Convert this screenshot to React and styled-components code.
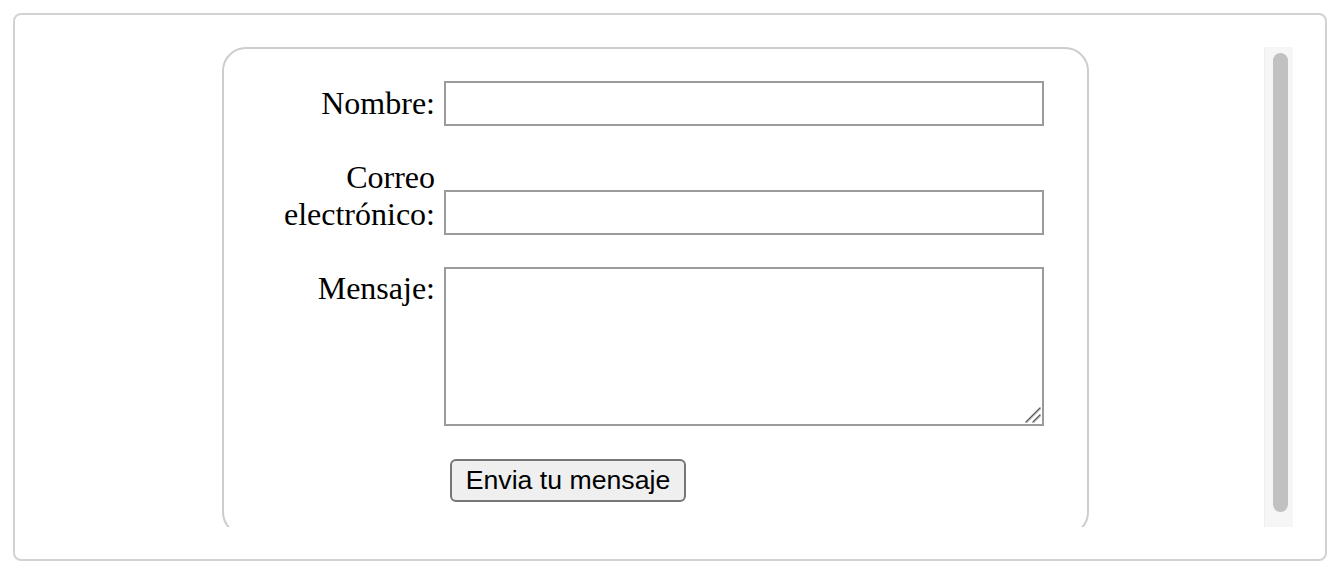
import React from 'react';
import styled, { createGlobalStyle } from 'styled-components';

const Global = createGlobalStyle`
  html, body { margin: 0; padding: 0; background: #fff; }
  body { font-family: "Liberation Serif", "Times New Roman", serif; }
`;

const Frame = styled.div`
  box-sizing: border-box;
  margin: 13px;
  width: 1314px;
  height: 548px;
  border: 2px solid #d2d2d2;
  border-radius: 8px;
  padding: 32px;
`;

const Scroller = styled.div`
  display: flex;
  height: 480px;
`;

const Viewport = styled.div`
  flex: 1;
  min-width: 0;
  overflow: hidden;
`;

const Track = styled.div`
  box-sizing: border-box;
  width: 29px;
  display: flex;
  flex-direction: column;
  padding: 6px 5px 15px 8px;
  background: #f6f6f6;
  border-left: 1px solid #efefef;
`;

const Thumb = styled.div`
  flex: 1;
  background: #c1c1c1;
  border-radius: 8px;
`;

const Card = styled.form`
  box-sizing: border-box;
  width: 867px;
  margin: 0 auto;
  border: 2px solid #cdcdcd;
  border-radius: 24px;
  padding: 32px 43px 32px 0;
  display: flex;
  flex-direction: column;
`;

const Row = styled.div`
  display: grid;
  grid-template-columns: 211px 600px;
  column-gap: 9px;
  align-items: start;
  margin-top: ${p => p.$gap || 0}px;
`;

const Label = styled.label`
  font-family: "Liberation Serif", "Times New Roman", serif;
  font-size: 32px;
  line-height: 37px;
  text-align: right;
  color: #000;
  margin-top: ${p => p.$offset || 0}px;
`;

const Input = styled.input`
  box-sizing: border-box;
  width: 600px;
  height: 45px;
  margin: ${p => p.$offset || 0}px 0 0;
  padding: 2px 4px;
  border: 2px solid #9b9b9b;
  border-radius: 0;
  background: #fff;
  font: 26px "Liberation Sans", Arial, sans-serif;
  outline: none;
`;

const AreaBox = styled.div`
  position: relative;
  width: 600px;
  height: 159px;
  margin-top: ${p => p.$offset || 0}px;
`;

const Area = styled.textarea`
  box-sizing: border-box;
  display: block;
  width: 100%;
  height: 100%;
  margin: 0;
  padding: 4px;
  border: 2px solid #9b9b9b;
  border-radius: 0;
  background: #fff;
  resize: none;
  font: 26px "Liberation Mono", monospace;
  outline: none;
`;

const Grip = styled.svg`
  position: absolute;
  right: 2px;
  bottom: 2px;
  width: 18px;
  height: 18px;
  pointer-events: none;
`;

const Submit = styled.button`
  grid-column: 2;
  justify-self: start;
  margin-left: 6px;
  box-sizing: border-box;
  width: 236px;
  height: 43px;
  padding: 0;
  border: 2px solid #767676;
  border-radius: 6px;
  background: #efefef;
  color: #000;
  font-family: "Liberation Sans", Arial, sans-serif;
  font-size: 26.67px;
  line-height: 1;
  cursor: pointer;
`;

export default function App() {
  return (
    <>
      <Global />
      <Frame>
        <Scroller>
          <Viewport>
            <Card onSubmit={e => e.preventDefault()}>
              <Row>
                <Label htmlFor="nombre" $offset={4}>Nombre:</Label>
                <Input id="nombre" type="text" />
              </Row>
              <Row $gap={33}>
                <Label htmlFor="correo">Correo<br />electrónico:</Label>
                <Input id="correo" type="email" $offset={31} />
              </Row>
              <Row $gap={32}>
                <Label htmlFor="mensaje" $offset={3}>Mensaje:</Label>
                <AreaBox>
                  <Area id="mensaje" />
                  <Grip viewBox="0 0 18 18">
                    <path d="M2 16 L16 2" stroke="#5a5a5a" strokeWidth="1.4" strokeLinecap="round" />
                    <path d="M9 16 L16 9" stroke="#5a5a5a" strokeWidth="1.4" strokeLinecap="round" />
                    <path d="M3 17 L17 3" stroke="#c8c8c8" strokeWidth="0.8" />
                    <path d="M10 17 L17 10" stroke="#c8c8c8" strokeWidth="0.8" />
                  </Grip>
                </AreaBox>
              </Row>
              <Row $gap={33}>
                <Submit type="submit">Envia tu mensaje</Submit>
              </Row>
            </Card>
          </Viewport>
          <Track>
            <Thumb />
          </Track>
        </Scroller>
      </Frame>
    </>
  );
}
